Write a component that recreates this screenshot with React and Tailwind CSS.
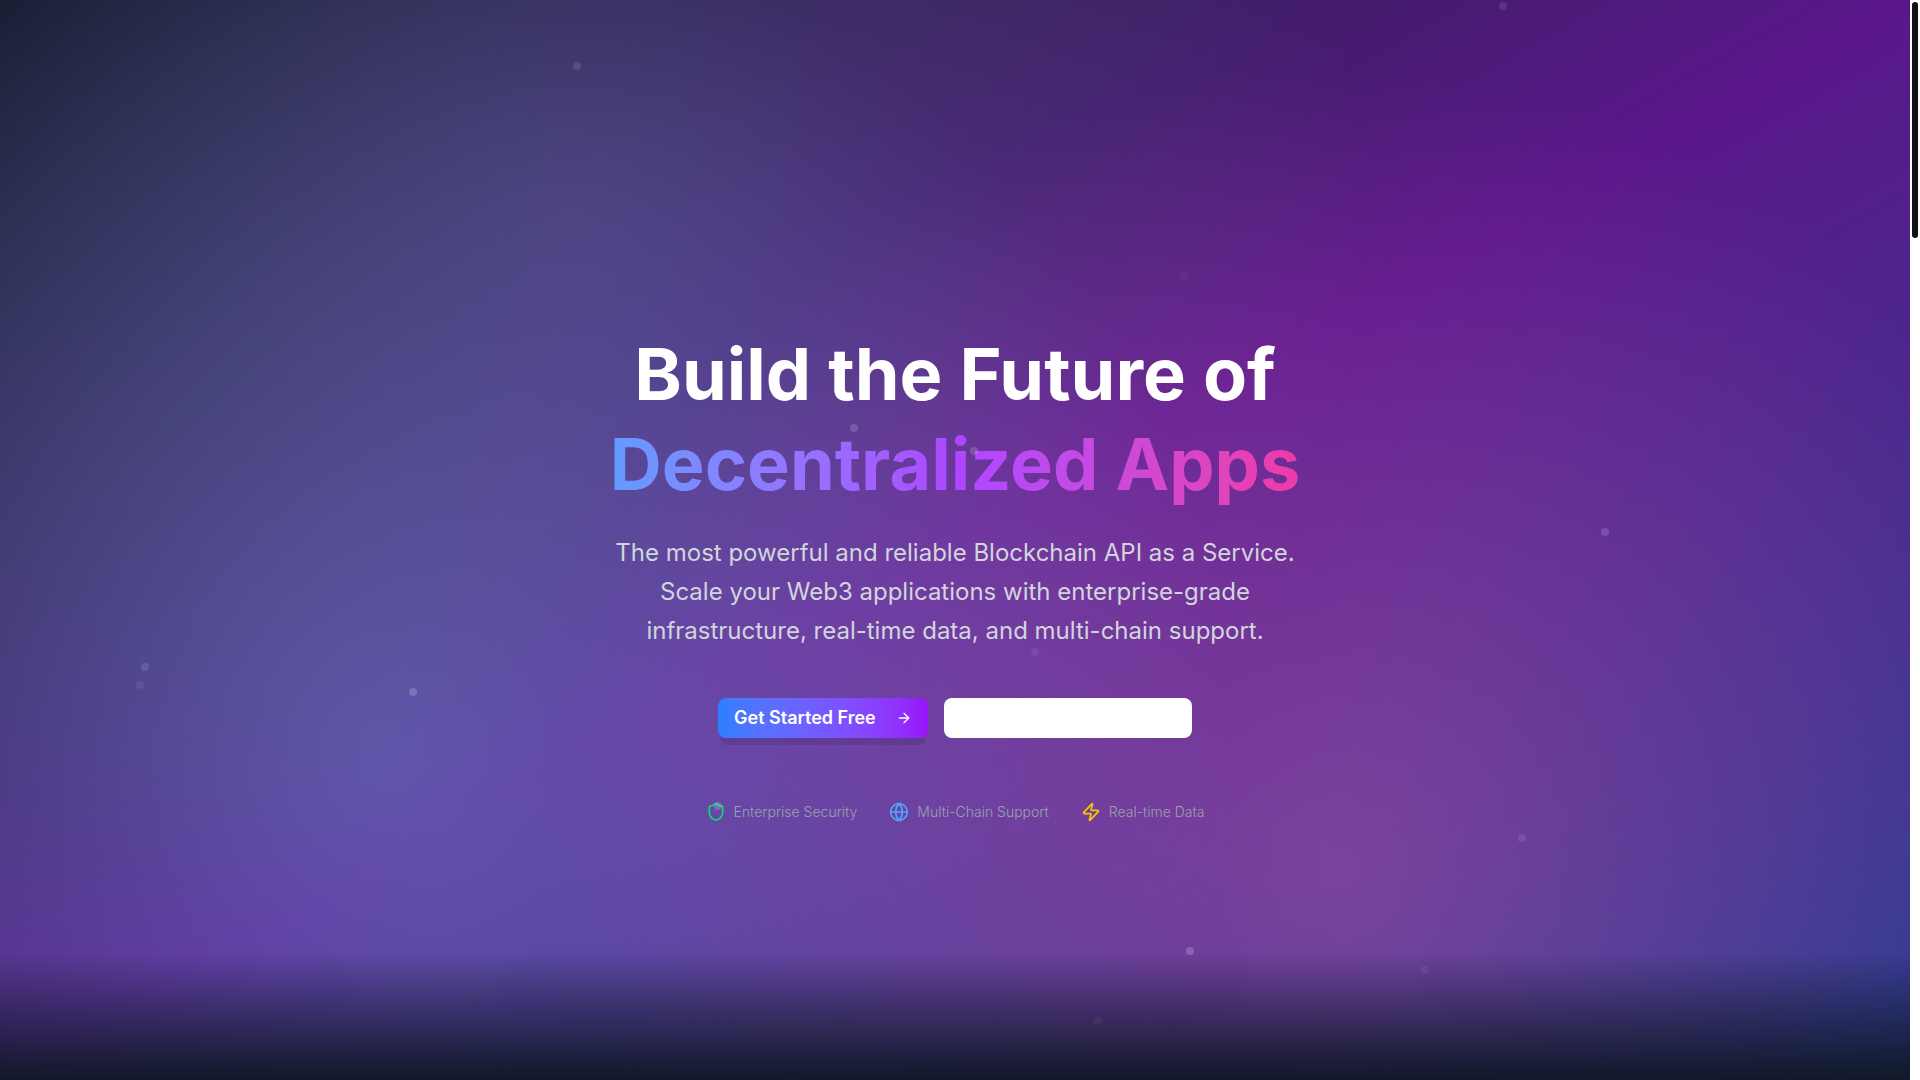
import { ArrowRight, Globe, Shield, Zap } from 'lucide-react'

// Floating particles, placed in % of the hero
const particles = [
  { left: 30, top: 5.7, opacity: 0.11 },
  { left: 78.5, top: 0.2, opacity: 0.1 },
  { left: 61.8, top: 25.1, opacity: 0.04 },
  { left: 44.5, top: 39.3, opacity: 0.16 },
  { left: 50.8, top: 41.4, opacity: 0.16 },
  { left: 83.8, top: 48.9, opacity: 0.15 },
  { left: 7.4, top: 61.4, opacity: 0.12 },
  { left: 7.1, top: 63.1, opacity: 0.08 },
  { left: 21.4, top: 63.7, opacity: 0.18 },
  { left: 54, top: 60, opacity: 0.08 },
  { left: 37.4, top: 74.3, opacity: 0.18 },
  { left: 79.5, top: 77.2, opacity: 0.1 },
  { left: 62.1, top: 87.7, opacity: 0.2 },
  { left: 74.4, top: 89.4, opacity: 0.06 },
  { left: 57.3, top: 94.2, opacity: 0.05 },
]

const features = [
  { icon: Shield, label: 'Enterprise Security', color: 'text-green-400' },
  { icon: Globe, label: 'Multi-Chain Support', color: 'text-blue-400' },
  { icon: Zap, label: 'Real-time Data', color: 'text-yellow-400' },
]

function Background() {
  return (
    <div className="absolute inset-0 pointer-events-none" aria-hidden="true">
      <div className="absolute inset-0 bg-[radial-gradient(circle_at_30%_20%,rgba(120,119,198,0.3)_0%,transparent_50%),radial-gradient(circle_at_70%_80%,rgba(255,119,198,0.3)_0%,transparent_50%),radial-gradient(circle_at_20%_70%,rgba(120,219,255,0.3)_0%,transparent_50%)]" />
      <div className="absolute inset-x-0 bottom-0 h-32 bg-gradient-to-t from-gray-900 to-transparent" />
    </div>
  )
}

function Particles() {
  return (
    <div className="absolute inset-0 pointer-events-none" aria-hidden="true">
      {particles.map((p, i) => (
        <span
          key={i}
          className="absolute w-2 h-2 rounded-full bg-white"
          style={{ left: `${p.left}%`, top: `${p.top}%`, opacity: p.opacity }}
        />
      ))}
    </div>
  )
}

function Hero() {
  return (
    <section className="relative flex-1 flex items-center justify-center min-h-screen pt-[70px] overflow-hidden bg-gradient-to-br from-gray-900 via-purple-900 to-blue-900">
      <Background />

      <div className="relative w-full max-w-3xl text-center">
        <h1 className="mb-6 text-7xl leading-tight font-bold text-white">
          Build the Future of
          <span className="block bg-gradient-to-r from-blue-400 via-purple-500 to-pink-500 bg-clip-text text-transparent">
            Decentralized Apps
          </span>
        </h1>

        <p className="mb-12 px-8 text-2xl leading-relaxed text-gray-300">
          The most powerful and reliable Blockchain API as a Service. Scale your Web3 applications
          with enterprise-grade infrastructure, real-time data, and multi-chain support.
        </p>

        <div className="mb-16 flex justify-center gap-4">
          <button
            type="button"
            className="h-10 w-[210px] px-4 flex items-center justify-between rounded-lg bg-gradient-to-r from-blue-500 to-purple-600 text-lg font-semibold text-white shadow-[0_10px_0_-3px_rgba(0,0,0,0.1)]"
          >
            Get Started Free
            <ArrowRight className="w-4 h-4" />
          </button>
          <button
            type="button"
            aria-label="View Documentation"
            className="h-10 w-62 rounded-lg bg-white"
          />
        </div>

        <ul className="flex justify-center gap-8 text-sm font-light text-gray-400">
          {features.map(({ icon: Icon, label, color }) => (
            <li key={label} className="flex items-center gap-2">
              <Icon className={`w-5 h-5 ${color}`} />
              <span>{label}</span>
            </li>
          ))}
        </ul>
      </div>

      <Particles />
    </section>
  )
}

// Page scrollbar track with its thumb
function ScrollTrack() {
  return (
    <div className="w-[10px] p-[2px] bg-white" aria-hidden="true">
      <div className="w-[6px] h-[236px] rounded-full bg-[#111111]" />
    </div>
  )
}

export default function App() {
  return (
    <div className="flex min-h-screen font-[Inter,sans-serif]">
      <Hero />
      <ScrollTrack />
    </div>
  )
}
